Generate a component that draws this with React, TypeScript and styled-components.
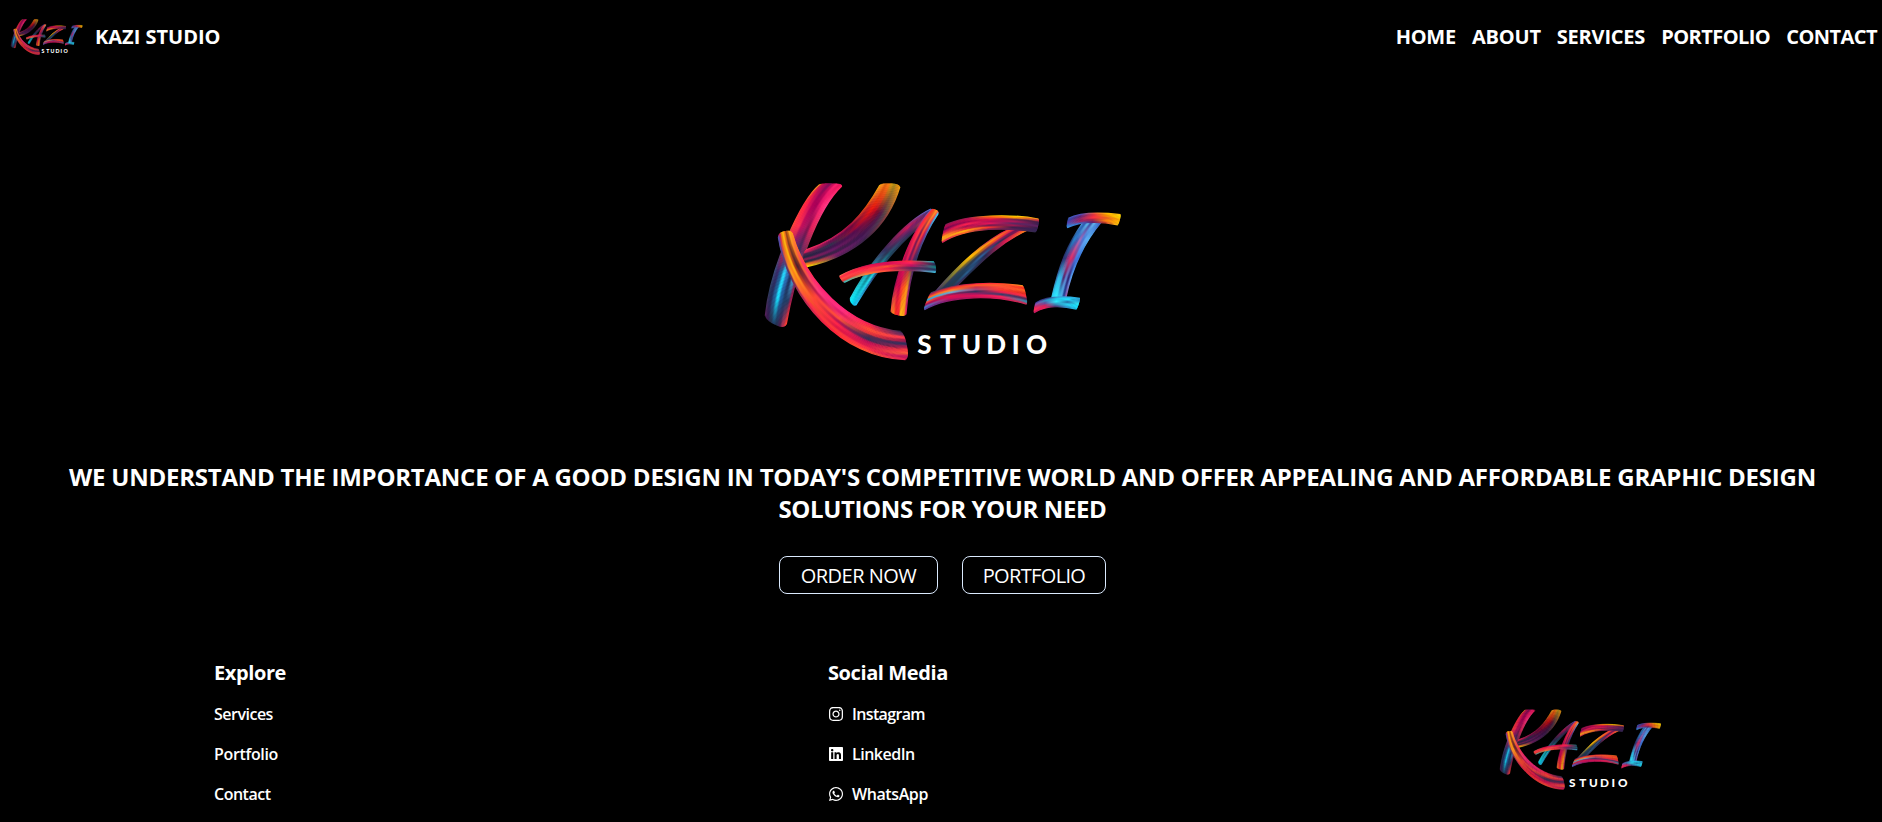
import React from 'react';
import styled, { createGlobalStyle } from 'styled-components';
import { FaInstagram, FaLinkedin, FaWhatsapp } from 'react-icons/fa';

const GlobalStyle = createGlobalStyle`
  * { box-sizing: border-box; }
  html, body { margin: 0; background: #000; }
  body {
    color: #fff;
    font-family: 'Open Sans', 'Noto Sans', sans-serif;
    overflow: hidden;
  }
`;

const Page = styled.div`
  height: 822px;
  display: flex;
  flex-direction: column;
  background: #000;
  overflow: hidden;
`;

const Header = styled.header`
  height: 73px;
  display: flex;
  align-items: center;
  justify-content: space-between;
  padding: 1px 5px 0 11px;
`;

const Brand = styled.div`
  display: flex;
  align-items: center;
  gap: 12.5px;
`;

const Text = styled.span<{ $track?: number }>`
  letter-spacing: ${(p) => p.$track ?? 0}px;
  white-space: nowrap;
`;

const BrandName = styled(Text)`
  font-size: 20px;
  line-height: 28px;
  font-weight: 700;
`;

const Nav = styled.nav`
  display: flex;
  gap: 16px;
`;

const NavLink = styled(Text).attrs({ as: 'a' })`
  font-size: 20px;
  line-height: 28px;
  font-weight: 700;
  cursor: pointer;
`;

const Hero = styled.main`
  display: flex;
  flex-direction: column;
  align-items: center;
  padding: 109px 0 0 3px;
`;

const LogoSvg = styled.svg<{ $width: number }>`
  display: block;
  width: ${(p) => p.$width}px;
  height: ${(p) => p.$width / 2}px;
  overflow: visible;
`;

const Tagline = styled.h1`
  margin: 101px 0 0;
  width: 1790px;
  font-size: 24px;
  line-height: 32px;
  font-weight: 700;
  letter-spacing: -0.24px;
  text-align: center;
`;

const TaglineEnd = styled.span`
  letter-spacing: -0.38px;
`;

const Actions = styled.div`
  display: flex;
  gap: 24px;
  margin-top: 31px;
`;

const ActionButton = styled.button<{ $width: number; $track: number }>`
  width: ${(p) => p.$width}px;
  height: 38px;
  padding: 5px 0 3px;
  border: 1px solid #dbeafe;
  border-radius: 8px;
  background: transparent;
  color: #fff;
  font: 400 20px/28px 'Open Sans', 'Noto Sans', sans-serif;
  letter-spacing: ${(p) => p.$track}px;
  white-space: nowrap;
`;

const Footer = styled.footer`
  display: grid;
  grid-template-columns: 614px 672px 1fr;
  padding: 65px 0 0 214px;
`;

const Column = styled.div`
  display: flex;
  flex-direction: column;
  gap: 16px;
`;

const ColumnTitle = styled(Text).attrs({ as: 'h2' })`
  margin: 0 0 -1px;
  font-size: 20px;
  line-height: 28px;
  font-weight: 700;
`;

const FooterLink = styled.a`
  display: flex;
  align-items: center;
  gap: 8px;
  font-size: 16px;
  line-height: 24px;
  font-weight: 600;
`;

const FooterLogo = styled.div`
  padding-top: 50px;
`;

type Pt = [number, number];
type Curve = [Pt, Pt, Pt, Pt];
interface Brush {
  a: Curve;
  b: Curve;
  /** how far the bristles at both edges are shortened, as a share of the length */
  cap: number;
  colors: string[][];
}

const BRUSHES: Brush[] = [
  {
    // K, stem
    a: [[213, 41], [156, 80], [54, 300], [44, 450]],
    b: [[283, 43], [204, 110], [138, 300], [107, 480]],
    cap: 0.04,
    colors: [
      ['#f9a01b', '#ff3040', '#ff4a3a', '#7a2860', '#3a4a7a', '#2c3a5c', '#5a1f5a'],
      ['#c0104a', '#ff2048', '#ff3347', '#d82050', '#3b2a6b', '#1f2f5a', '#3b1a50'],
      ['#a00a5a', '#d4105a', '#ff3050', '#8b2060', '#1f5a90', '#24609a', '#27304a'],
      ['#7a1058', '#b00058', '#c00f5c', '#6a2070', '#28d8ff', '#19e0ff', '#1f3b66'],
      ['#d0105e', '#a80058', '#b01660', '#4a2b68', '#2f6fb8', '#205a9c', '#25304f'],
      ['#ff1f6e', '#e0146a', '#8a1050', '#33305c', '#203060', '#21406a', '#4a2050'],
      ['#e8145f', '#ff2a78', '#e8205c', '#6a2a60', '#50b0e8', '#233b64', '#c03050'],
      ['#ff2060', '#ff3a8a', '#e03060', '#7a2a50', '#7a1f50', '#a01c50', '#ff4030'],
    ],
  },
  {
    // K, upper arm
    a: [[392, 40], [344, 126], [286, 204], [160, 242]],
    b: [[453, 43], [421, 165], [325, 262], [160, 294]],
    cap: 0.035,
    colors: [
      ['#f0b010', '#e85010', '#b01040', '#d02060', '#ff3060'],
      ['#ff9018', '#d02020', '#700840', '#6a1050', '#e0205a'],
      ['#e06a10', '#f01810', '#980838', '#303050', '#482048'],
      ['#ff8010', '#c80c20', '#580d50', '#401850', '#202840'],
      ['#d8a010', '#800c30', '#5a1650', '#681a64', '#882050'],
      ['#b09018', '#5a1a48', '#441450', '#3c2048', '#202840'],
      ['#e09010', '#54404c', '#4c1d5c', '#7a1c68', '#ff8018'],
      ['#f0a012', '#884040', '#3a2448', '#5b205c', '#ffe000'],
    ],
  },
  {
    // K, leg
    a: [[124, 180], [165, 335], [296, 475], [462, 485]],
    b: [[83, 190], [106, 388], [282, 575], [479, 571]],
    cap: 0.03,
    colors: [
      ['#ff9a18', '#ff4040', '#ff1e70', '#ff2a78', '#f02058', '#28304f'],
      ['#ffa018', '#ff3560', '#ff2d78', '#ff2e80', '#ff3040', '#5f2c60'],
      ['#ffb020', '#f06028', '#ff3a80', '#e01c68', '#ff5036', '#ff3850'],
      ['#d06a10', '#702828', '#c81c50', '#ff3a60', '#f03838', '#a01850'],
      ['#a04818', '#482030', '#ff4040', '#ff5038', '#58284e', '#303060'],
      ['#ff8018', '#a03018', '#ff4a30', '#b81454', '#353058', '#b01c50'],
      ['#ffb810', '#ffae10', '#ff4838', '#ff2448', '#c01058', '#ff4040'],
      ['#e08a10', '#ff8418', '#f85030', '#e01848', '#d81850', '#ff5c40'],
      ['#c81858', '#fca020', '#ff3048', '#ff3838', '#ff3048', '#c01860'],
      ['#5050b0', '#602858', '#d02850', '#ff203c', '#ff6030', '#e82058'],
    ],
  },
  {
    // A, left leg
    a: [[546, 116], [466, 150], [356, 275], [297, 392]],
    b: [[560, 133], [467, 197], [386, 292], [315, 413]],
    cap: 0.03,
    colors: [
      ['#5878e0', '#a02060', '#402858', '#208890', '#30e0f0'],
      ['#303878', '#d01858', '#343060', '#20b8c8', '#10f0ff'],
      ['#6a2060', '#802068', '#303458', '#18808c', '#00e8ff'],
      ['#ff5030', '#502460', '#205870', '#20e0f0', '#18b8e0'],
      ['#c02050', '#303050', '#204058', '#28508a', '#20d0ff'],
    ],
  },
  {
    // A, right leg
    a: [[547, 116], [480, 180], [426, 340], [422, 432]],
    b: [[569, 126], [505, 220], [476, 330], [468, 442]],
    cap: 0.035,
    colors: [
      ['#5868d8', '#b01050', '#d80c50', '#900c50', '#ff6038'],
      ['#ff3030', '#ff2048', '#b01050', '#d80850', '#ff8020'],
      ['#f04820', '#ff3848', '#e81858', '#c80850', '#ff3020'],
      ['#ff7020', '#7a1850', '#70185c', '#ff4030', '#f82038'],
      ['#ffa020', '#ff4038', '#a02058', '#ff6018', '#ffc018'],
      ['#ff6048', '#b81858', '#432860', '#ff9818', '#ffa018'],
      ['#38d0ff', '#5050a0', '#283058', '#802070', '#f01868'],
    ],
  },
  {
    // A, crossbar
    a: [[266, 320], [340, 276], [450, 268], [555, 276]],
    b: [[281, 340], [350, 302], [460, 296], [560, 310]],
    cap: 0.02,
    colors: [
      ['#ff8050', '#c01050', '#d01058', '#ff3030', '#20c0c8'],
      ['#ff3048', '#ff2040', '#d80c58', '#ff2058', '#202850'],
      ['#ff5040', '#ff3050', '#ff5030', '#c01060', '#108080'],
      ['#e83030', '#ff5040', '#f02048', '#582858', '#203860'],
      ['#30c0c0', '#ff8030', '#ff4840', '#803060', '#40c8e8'],
    ],
  },
  {
    // Z, diagonal
    a: [[782, 176], [700, 212], [620, 290], [550, 372]],
    b: [[836, 180], [745, 220], [682, 290], [610, 360]],
    cap: 0,
    colors: [
      ['#e81050', '#c02850', '#ffc000', '#606840', '#5a3080'],
      ['#f04030', '#ff9010', '#ffb800', '#888030', '#30305c'],
      ['#d81058', '#ff5020', '#907020', '#304058', '#283050'],
      ['#681050', '#902060', '#303850', '#20405c', '#203850'],
      ['#a01050', '#302c50', '#30609c', '#203c58', '#283848'],
      ['#ff4830', '#c81850', '#202850', '#2a6090', '#202c48'],
      ['#ff9010', '#e02050', '#402850', '#203050', '#502860'],
    ],
  },
  {
    // Z, top bar
    a: [[584, 166], [650, 132], [790, 132], [869, 148]],
    b: [[573, 222], [650, 169], [780, 175], [860, 188]],
    cap: 0.022,
    colors: [
      ['#802050', '#a01850', '#ffb000', '#ffe000', '#ffa010'],
      ['#b00850', '#c00c50', '#ff5020', '#ffa000', '#c02848'],
      ['#700850', '#a80850', '#e01048', '#702050', '#401c48'],
      ['#c01050', '#ff2050', '#b01058', '#b01858', '#382050'],
      ['#ff5030', '#a81050', '#e81458', '#582860', '#602060'],
      ['#ffb018', '#e82040', '#701c50', '#a01850', '#30204c'],
      ['#ff9820', '#ffb010', '#ff3030', '#40204c', '#382058'],
      ['#d01858', '#ff6828', '#802050', '#602058', '#30284c'],
    ],
  },
  {
    // Z, bottom bar
    a: [[540, 370], [620, 336], [740, 336], [822, 348]],
    b: [[519, 423], [600, 375], [740, 376], [834, 406]],
    cap: 0.022,
    colors: [
      ['#283858', '#802850', '#ff1848', '#ff3828', '#ffa020'],
      ['#c02050', '#ff3828', '#ff5828', '#ff6030', '#ff3020'],
      ['#ff6820', '#ff8828', '#c83050', '#ff4838', '#ff6020'],
      ['#30a8d8', '#68b0d8', '#a84878', '#ff3830', '#e83020'],
      ['#ff4830', '#a01858', '#30305c', '#e82050', '#ff3040'],
      ['#a01058', '#e81050', '#a01860', '#30406c', '#58285c'],
      ['#4080d0', '#d01058', '#e01058', '#ff2058', '#2890b0'],
      ['#5040a0', '#901868', '#c01458', '#d01c58', '#d02850'],
    ],
  },
  {
    // I, stem
    a: [[998, 158], [950, 225], [925, 290], [904, 386]],
    b: [[1056, 156], [1006, 215], [968, 290], [948, 386]],
    cap: 0,
    colors: [
      ['#50a8e8', '#203870', '#282c68', '#3060a0', '#30d0f0'],
      ['#3058b0', '#2880c8', '#303878', '#30c0e8', '#28e0ff'],
      ['#60c0f0', '#4060b8', '#a03078', '#38b0e8', '#30f0ff'],
      ['#2850a8', '#a06bb8', '#e03068', '#502870', '#20d8ff'],
      ['#68b8f0', '#4878d8', '#b03078', '#6080d0', '#48b8e8'],
      ['#4080d8', '#60a8f0', '#4878e0', '#302070', '#2048a0'],
      ['#385cc0', '#58b0f0', '#3870d8', '#58a0f0', '#a050a0'],
    ],
  },
  {
    // I, top bar
    a: [[954, 146], [990, 126], [1060, 128], [1114, 134]],
    b: [[949, 176], [1000, 151], [1060, 158], [1105, 167]],
    cap: 0.025,
    colors: [
      ['#4060c8', '#5050c0', '#f06040', '#ffc000', '#ffc010'],
      ['#3048a8', '#682878', '#e83040', '#ff9800', '#ffe000'],
      ['#5040b0', '#902868', '#ff3040', '#e86020', '#ffb000'],
      ['#3070d0', '#a02468', '#a02450', '#ff8010', '#ffb800'],
      ['#3890e0', '#3870d0', '#602070', '#d84030', '#ffc810'],
    ],
  },
  {
    // I, bottom bar
    a: [[856, 400], [890, 376], [945, 379], [992, 385]],
    b: [[850, 431], [890, 405], [945, 411], [981, 420]],
    cap: 0.025,
    colors: [
      ['#3040a0', '#302870', '#3898d0', '#30a8e0', '#28b8e8'],
      ['#a040a0', '#3090c0', '#20d0f0', '#20e0ff', '#2890c8'],
      ['#e82058', '#6050a0', '#30f0ff', '#2870a8', '#30f0ff'],
      ['#ff3050', '#d02060', '#3890c0', '#28d0f0', '#18e0ff'],
      ['#c01860', '#f02058', '#50306c', '#3088c0', '#20c8f0'],
    ],
  },
];

const mix = (p: Pt, q: Pt, t: number): Pt => [p[0] + (q[0] - p[0]) * t, p[1] + (q[1] - p[1]) * t];

/** Keeps the part of a cubic after t. */
const tail = (c: Curve, t: number): Curve => {
  const ab = mix(c[0], c[1], t);
  const bc = mix(c[1], c[2], t);
  const cd = mix(c[2], c[3], t);
  const abc = mix(ab, bc, t);
  const bcd = mix(bc, cd, t);
  return [mix(abc, bcd, t), bcd, cd, c[3]];
};

const flip = (c: Curve): Curve => [c[3], c[2], c[1], c[0]];

const channel = (hex: string, i: number) => parseInt(hex.slice(1 + i * 2, 3 + i * 2), 16);

const blend = (x: string, y: string, t: number) =>
  `rgb(${[0, 1, 2].map((i) => Math.round(channel(x, i) + (channel(y, i) - channel(x, i)) * t)).join(',')})`;

function Bristles({ brush, id }: { brush: Brush; id: string }) {
  const span = Math.max(
    Math.hypot(brush.a[0][0] - brush.b[0][0], brush.a[0][1] - brush.b[0][1]),
    Math.hypot(brush.a[3][0] - brush.b[3][0], brush.a[3][1] - brush.b[3][1]),
  );
  const count = Math.max(10, Math.round(span / 2.4));
  const rows = brush.colors.length;
  const strands = Array.from({ length: count }, (_, i) => {
    const s = (i + 0.5) / count;
    const full = brush.a.map((p, k) => mix(p, brush.b[k], s)) as Curve;
    const cut = brush.cap * (1 - Math.sqrt(1 - Math.pow(Math.abs(2 * s - 1), 3)));
    const c = flip(tail(flip(tail(full, cut)), cut));
    const pos = s * (rows - 1);
    const lo = Math.min(rows - 2, Math.floor(pos));
    const f = pos - lo;
    const eased = f * f * f * (f * (6 * f - 15) + 10);
    const stops = brush.colors[lo].map((col, k) => blend(col, brush.colors[lo + 1][k], eased));
    return { c, stops };
  });
  return (
    <g fill="none" strokeWidth={span / count + 1.6}>
      {strands.map(({ c, stops }, i) => (
        <g key={i}>
          <linearGradient
            id={`${id}-${i}`}
            gradientUnits="userSpaceOnUse"
            x1={c[0][0]}
            y1={c[0][1]}
            x2={c[3][0]}
            y2={c[3][1]}
          >
            {stops.map((col, k) => (
              <stop key={k} offset={k / (stops.length - 1)} stopColor={col} />
            ))}
          </linearGradient>
          <path
            stroke={`url(#${id}-${i})`}
            d={`M${c[0].join(' ')}C${c[1].join(' ')} ${c[2].join(' ')} ${c[3].join(' ')}`}
          />
        </g>
      ))}
    </g>
  );
}

function Logo({ width, name }: { width: number; name: string }) {
  return (
    <LogoSvg $width={width} viewBox="45 37 1068 534" role="img" aria-label="Kazi Studio">
      {BRUSHES.map((brush, i) => (
        <Bristles key={i} brush={brush} id={`${name}-${i}`} />
      ))}
      <text
        x="502 570 635 709 785 828"
        y="552"
        fill="#fff"
        fontFamily="Lato, sans-serif"
        fontWeight="900"
        fontSize="78"
      >
        STUDIO
      </text>
    </LogoSvg>
  );
}

const NAV: [string, number][] = [
  ['HOME', -0.25],
  ['ABOUT', -0.2],
  ['SERVICES', -0.2],
  ['PORTFOLIO', -0.55],
  ['CONTACT', -0.55],
];

const EXPLORE: [string, number][] = [
  ['Services', -0.5],
  ['Portfolio', -0.35],
  ['Contact', -0.5],
];

const SOCIAL: [string, number, React.ComponentType<{ size?: number }>][] = [
  ['Instagram', -0.65, FaInstagram],
  ['LinkedIn', -0.5, FaLinkedin],
  ['WhatsApp', -0.4, FaWhatsapp],
];

export default function App() {
  return (
    <Page>
      <GlobalStyle />
      <Header>
        <Brand>
          <Logo width={71.5} name="head" />
          <BrandName>KAZI STUDIO</BrandName>
        </Brand>
        <Nav>
          {NAV.map(([label, track]) => (
            <NavLink key={label} $track={track}>
              {label}
            </NavLink>
          ))}
        </Nav>
      </Header>
      <Hero>
        <Logo width={356} name="hero" />
        <Tagline>
          WE UNDERSTAND THE IMPORTANCE OF A GOOD DESIGN IN TODAY'S COMPETITIVE WORLD AND OFFER
          APPEALING AND AFFORDABLE GRAPHIC DESIGN <TaglineEnd>SOLUTIONS FOR YOUR NEED</TaglineEnd>
        </Tagline>
        <Actions>
          <ActionButton $width={159} $track={-0.5}>
            ORDER NOW
          </ActionButton>
          <ActionButton $width={144} $track={-0.65}>
            PORTFOLIO
          </ActionButton>
        </Actions>
      </Hero>
      <Footer>
        <Column>
          <ColumnTitle $track={-0.4}>Explore</ColumnTitle>
          {EXPLORE.map(([label, track]) => (
            <FooterLink key={label}>
              <Text $track={track}>{label}</Text>
            </FooterLink>
          ))}
        </Column>
        <Column>
          <ColumnTitle $track={-0.4}>Social Media</ColumnTitle>
          {SOCIAL.map(([label, track, Icon]) => (
            <FooterLink key={label}>
              <Icon size={16} />
              <Text $track={track}>{label}</Text>
            </FooterLink>
          ))}
        </Column>
        <FooterLogo>
          <Logo width={161} name="foot" />
        </FooterLogo>
      </Footer>
    </Page>
  );
}
